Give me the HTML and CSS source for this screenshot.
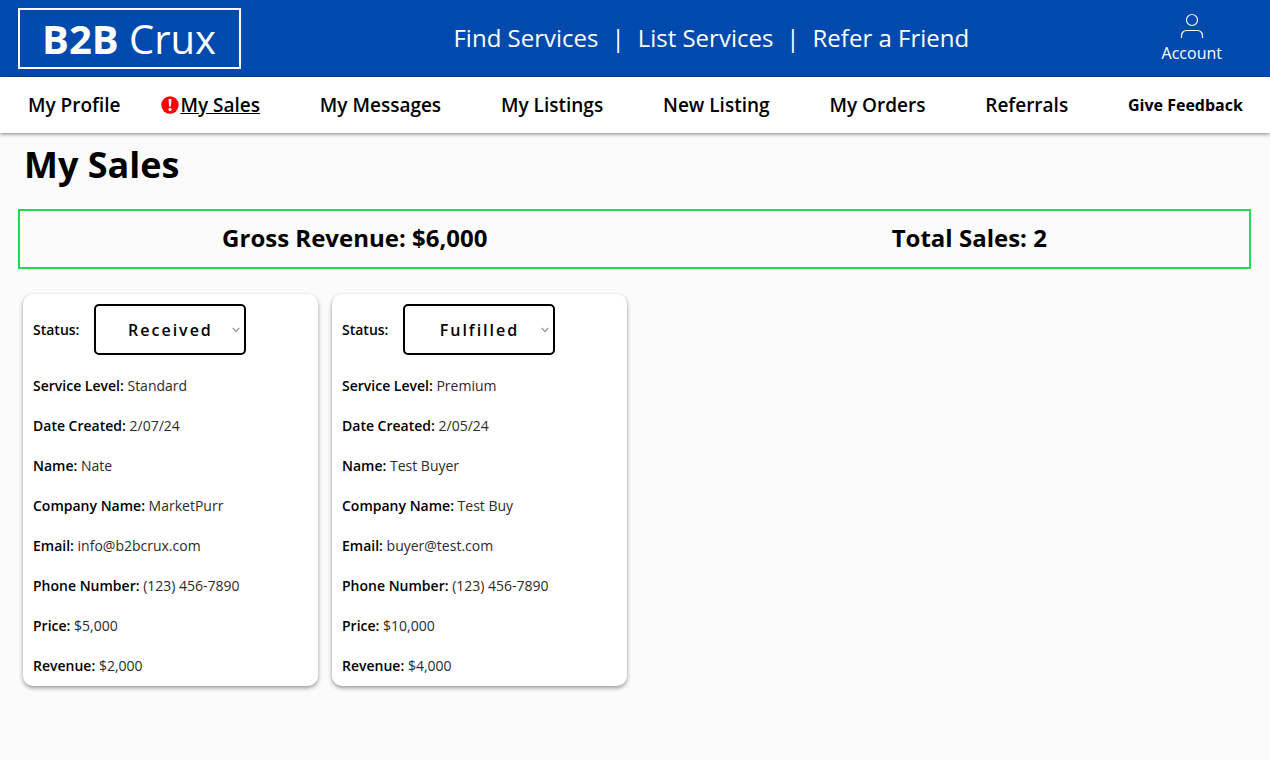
FILE: index.html
```html
<!DOCTYPE html>
<html lang="en">
<head>
<meta charset="utf-8">
<meta name="viewport" content="width=device-width, initial-scale=1">
<title>My Sales - B2B Crux</title>
<link rel="stylesheet" href="styles.css">
</head>
<body>
<header class="topbar">
  <a class="logo" href="#"><strong>B2B</strong> Crux</a>
  <nav class="main-links" aria-label="Main">
    <a href="#">Find Services</a>
    <span class="divider">|</span>
    <a href="#">List Services</a>
    <span class="divider">|</span>
    <a href="#">Refer a Friend</a>
  </nav>
  <a class="account" href="#">
    <svg class="account-icon" viewBox="0 0 24 26" aria-hidden="true">
      <circle cx="12" cy="7" r="5.5"/>
      <path d="M1.500 25v-2.500a5 5 0 0 1 5-5h11a5 5 0 0 1 5 5V25"/>
    </svg>
    <span>Account</span>
  </a>
</header>
<nav class="subnav" aria-label="Account pages">
  <a href="#">My Profile</a>
  <a class="current" href="#" aria-current="page">
    <svg class="alert" viewBox="0 0 18 18" aria-hidden="true">
      <circle cx="9" cy="9" r="8.700" fill="#f00"/>
      <path d="M7.500 3h3l-.6 7.500H8.100z" fill="#fff"/>
      <circle cx="9" cy="13.400" r="1.600" fill="#fff"/>
    </svg>My Sales</a>
  <a href="#">My Messages</a>
  <a href="#">My Listings</a>
  <a href="#">New Listing</a>
  <a href="#">My Orders</a>
  <a href="#">Referrals</a>
  <button class="feedback" type="button">Give Feedback</button>
</nav>
<main class="page">
  <h1>My Sales</h1>
  <section class="summary" aria-label="Totals">
    <p>Gross Revenue: $6,000</p>
    <p>Total Sales: 2</p>
  </section>
  <section class="cards" aria-label="Sales">
    <article class="card">
      <div class="status">
        <label for="status-1">Status:</label>
        <div class="picker">
          <select id="status-1"><option>Received</option><option>Fulfilled</option></select>
          <svg class="chevron" viewBox="0 0 8 6" aria-hidden="true"><path d="M.7 1 4 4.500 7.300 1"/></svg>
        </div>
      </div>
      <p><b>Service Level:</b> Standard</p>
      <p><b>Date Created:</b> 2/07/24</p>
      <p><b>Name:</b> Nate</p>
      <p><b>Company Name:</b> MarketPurr</p>
      <p><b>Email:</b> info@b2bcrux.com</p>
      <p><b>Phone Number:</b> (123) 456-7890</p>
      <p><b>Price:</b> $5,000</p>
      <p><b>Revenue:</b> $2,000</p>
    </article>
    <article class="card">
      <div class="status">
        <label for="status-2">Status:</label>
        <div class="picker">
          <select id="status-2"><option>Received</option><option selected>Fulfilled</option></select>
          <svg class="chevron" viewBox="0 0 8 6" aria-hidden="true"><path d="M.7 1 4 4.500 7.300 1"/></svg>
        </div>
      </div>
      <p><b>Service Level:</b> Premium</p>
      <p><b>Date Created:</b> 2/05/24</p>
      <p><b>Name:</b> Test Buyer</p>
      <p><b>Company Name:</b> Test Buy</p>
      <p><b>Email:</b> buyer@test.com</p>
      <p><b>Phone Number:</b> (123) 456-7890</p>
      <p><b>Price:</b> $10,000</p>
      <p><b>Revenue:</b> $4,000</p>
    </article>
  </section>
</main>
</body>
</html>
```
FILE: styles.css
```css
* { box-sizing: border-box; }

body {
  margin: 0;
  background: #fbfbfb;
  color: #000;
  font-family: "Open Sans", "Noto Sans", sans-serif;
  font-size: 14px;
}

a { color: inherit; text-decoration: none; }
h1, p { margin: 0; }

.topbar {
  display: flex;
  justify-content: space-between;
  align-items: center;
  padding: 8px 48px 8px 18px;
  background: #004aad;
  color: #fff;
}

.logo {
  padding: 0 23px 0 22px;
  border: 2px solid #fff;
  font-size: 40px;
  line-height: 57px;
}

.main-links {
  display: flex;
  gap: 13px;
  padding: 0 0 2px 20px;
  font-size: 24px;
  line-height: 32px;
}

.account {
  display: flex;
  flex-direction: column;
  align-items: center;
  gap: 4px;
  padding-bottom: 2px;
  font-size: 16px;
  line-height: 20px;
}

.account-icon {
  width: 24px;
  height: 26px;
  fill: none;
  stroke: #fff;
  stroke-width: 1.2;
}

.subnav {
  display: flex;
  justify-content: space-between;
  align-items: center;
  padding: 0 27px 0 28px;
  background: #fff;
  box-shadow: 0 1px 4px rgba(0, 0, 0, 0.5);
  font-size: 19px;
  font-weight: 600;
  line-height: 56px;
}

.current {
  position: relative;
  text-decoration: underline;
}

.alert {
  position: absolute;
  right: 100%;
  top: 50%;
  width: 18px;
  height: 18px;
  margin: -9px 1px 0 0;
}

.feedback {
  padding: 0;
  border: 0;
  background: none;
  color: inherit;
  font: inherit;
  font-size: 16px;
  font-weight: 700;
}

.page { padding: 7px 19px 40px 18px; }

h1 {
  padding-left: 6px;
  font-size: 36px;
  font-weight: 700;
  line-height: 50px;
}

.summary {
  display: flex;
  justify-content: space-around;
  margin-top: 19px;
  padding: 9px 0 11px;
  border: 2px solid #1fdc55;
  font-size: 24px;
  font-weight: 700;
  line-height: 36px;
}

.cards {
  display: flex;
  flex-wrap: wrap;
  gap: 14px;
  margin-top: 25px;
  padding: 0 5px;
}

.card {
  flex: 0 0 295px;
  display: flex;
  flex-direction: column;
  gap: 20px;
  padding: 10px;
  border-radius: 10px;
  background: #fff;
  box-shadow: 0 2px 4px rgba(0, 0, 0, 0.4);
  color: #2b2b2b;
  font-weight: 400;
  line-height: 20px;
}

.card b, .status { color: #000; font-weight: 600; }

.status {
  display: flex;
  align-items: center;
  gap: 15px;
  padding-bottom: 1px;
}

.picker { position: relative; }

.picker select {
  display: block;
  appearance: none;
  width: 152px;
  height: 51px;
  padding: 0;
  border: 2px solid #000;
  border-radius: 5px;
  background: #fff;
  color: #000;
  font: inherit;
  font-size: 16px;
  letter-spacing: 2px;
  text-align-last: center;
}

.chevron {
  position: absolute;
  right: 6px;
  top: 23px;
  width: 8px;
  height: 6px;
  fill: none;
  stroke: #999;
  stroke-width: 1.3;
  pointer-events: none;
}
```
